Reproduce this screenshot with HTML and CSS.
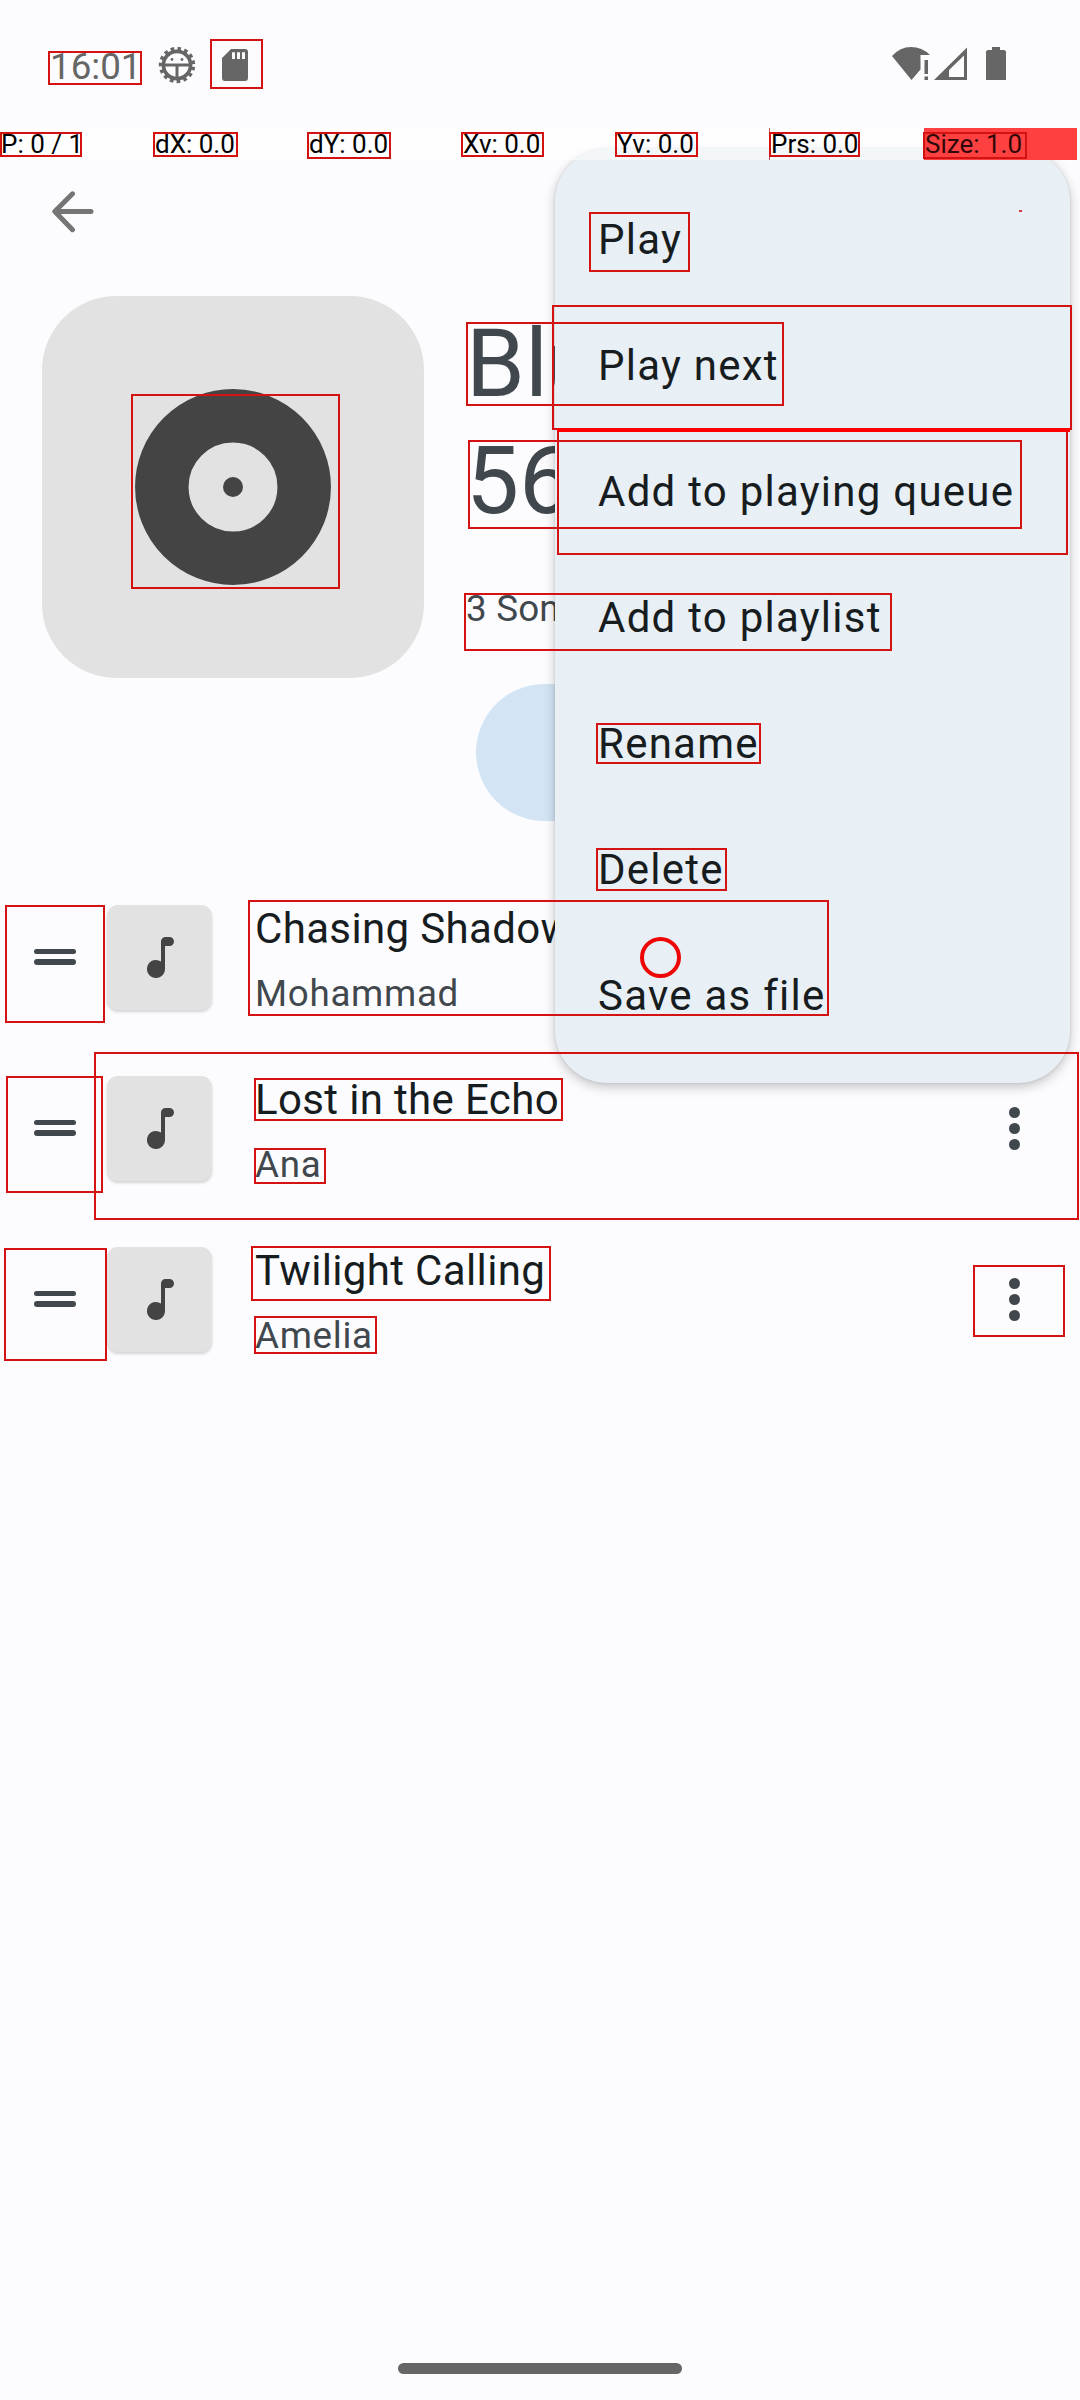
FILE: index.html
```html
<!DOCTYPE html>
<html lang="en">
<head>
<meta charset="utf-8">
<title>Playlist</title>
<link rel="stylesheet" href="styles.css">
</head>
<body>
<div class="screen">
  <header class="status">
    <span class="clock">16:01</span>
    <svg class="gear" width="38" height="38" viewBox="-19 -19 38 38">
      <circle r="13.6" fill="none" stroke="#666" stroke-width="3.6"/>
      <circle r="16" fill="none" stroke="#666" stroke-width="4.4" stroke-dasharray="3.5 3.202" transform="rotate(6)"/>
      <path d="M-13 0H13M0 0V13" stroke="#666" stroke-width="3"/>
      <circle cx="-5" cy="-5.500" r="1.400" fill="#666"/><circle cx="5" cy="-5.500" r="1.400" fill="#666"/>
    </svg>
    <svg class="sdcard" width="26" height="32" viewBox="0 0 26 32">
      <path fill="#666" fill-rule="evenodd" d="M9 0H23a3 3 0 0 1 3 3V29a3 3 0 0 1-3 3H3a3 3 0 0 1-3-3V9ZM10 3.3V10h3V3.3ZM15 3.3V10h3V3.3ZM20 3.3V10h3V3.3Z"/>
    </svg>
    <span class="spacer"></span>
    <svg width="115" height="34" viewBox="892 47 115 34" fill="#666">
      <path d="M892 56Q900 47 911 47T930 55H920.500V69.500L911.500 80Z"/>
      <path d="M924.500 60h3.500v14h-3.500zM924.500 76.500h3.500v3.500h-3.500z"/>
      <path fill-rule="evenodd" d="M934 80L967 47.500V80ZM949 77H964V55.500L949 70Z"/>
      <path d="M992 47h8v3h4.500l1.500 1.500V80H986V51.500l1.500-1.500h4.500z"/>
    </svg>
  </header>
  <div class="toolbar">
    <svg width="42" height="42" viewBox="0 0 42 42" fill="none" stroke="#757575" stroke-width="5" stroke-linecap="round" stroke-linejoin="round">
      <path d="M39 20.500H3M20.500 2.800L2.800 20.500L20.500 38.700"/>
    </svg>
  </div>
  <section class="hero">
    <div class="cover">
      <svg width="196" height="196" viewBox="-98 -98 196 196">
        <circle r="71.200" fill="none" stroke="#444" stroke-width="53.500"/>
        <circle r="10" fill="#444"/>
      </svg>
    </div>
    <div class="info">
      <h1>Blue<br>56</h1>
      <p>3 Songs</p>
      <div class="pill"></div>
    </div>
  </section>
  <main class="songs">
    <div class="song">
      <span class="handle"></span>
      <span class="thumb"><svg width="27" height="41" viewBox="0 0 27 41"><path fill="#444" d="M14 4.500a4.500 4.500 0 0 1 4.500-4.500H22.500a4.500 4.500 0 0 1 0 9H18V32a9 9 0 1 1-4-7.500Z"/></svg></span>
      <div class="text"><div class="name">Chasing Shadows</div><div class="artist">Mohammad</div></div>
      <span class="more"><i></i><i></i><i></i></span>
    </div>
    <div class="song">
      <span class="handle"></span>
      <span class="thumb"><svg width="27" height="41" viewBox="0 0 27 41"><path fill="#444" d="M14 4.500a4.500 4.500 0 0 1 4.500-4.500H22.500a4.500 4.500 0 0 1 0 9H18V32a9 9 0 1 1-4-7.500Z"/></svg></span>
      <div class="text"><div class="name">Lost in the Echo</div><div class="artist">Ana</div></div>
      <span class="more"><i></i><i></i><i></i></span>
    </div>
    <div class="song">
      <span class="handle"></span>
      <span class="thumb"><svg width="27" height="41" viewBox="0 0 27 41"><path fill="#444" d="M14 4.500a4.500 4.500 0 0 1 4.500-4.500H22.500a4.500 4.500 0 0 1 0 9H18V32a9 9 0 1 1-4-7.500Z"/></svg></span>
      <div class="text"><div class="name">Twilight Calling</div><div class="artist">Amelia</div></div>
      <span class="more"><i></i><i></i><i></i></span>
    </div>
  </main>
  <div class="navbar"></div>

  <nav class="menu">
    <div>Play</div>
    <div>Play next</div>
    <div>Add to playing queue</div>
    <div>Add to playlist</div>
    <div>Rename</div>
    <div>Delete</div>
    <div>Save as file</div>
  </nav>

  <div class="pointer">
    <span>P: 0 / 1</span><span>dX: 0.0</span><span>dY: 0.0</span><span>Xv: 0.0</span><span>Yv: 0.0</span><span class="prs">Prs: 0.0</span><span class="size">Size: 1.0</span>
  </div>

  <svg class="marks" width="1080" height="2400" viewBox="0 0 1080 2400" fill="none" stroke="#d51212" stroke-width="2">
    <rect x="49" y="52" width="92" height="32"/>
    <rect x="211" y="40" width="51" height="48"/>
    <rect x="1" y="133" width="80" height="23"/>
    <rect x="154" y="133" width="83" height="23"/>
    <rect x="308" y="133" width="82" height="25"/>
    <rect x="462" y="133" width="81" height="23"/>
    <rect x="616" y="133" width="81" height="23"/>
    <rect x="770" y="133" width="89" height="23"/>
    <rect x="924" y="133" width="102" height="25"/>
    <rect x="132" y="395" width="207" height="193"/>
    <rect x="467" y="323" width="316" height="82"/>
    <rect x="469" y="441" width="552" height="87"/>
    <rect x="465" y="594" width="426" height="56"/>
    <rect x="590" y="213" width="99" height="58"/>
    <rect x="553" y="306" width="518" height="123"/>
    <rect x="558" y="431" width="509" height="123"/>
    <path d="M557 430H1070" stroke="#f00" stroke-width="4"/>
    <rect x="597" y="724" width="163" height="39"/>
    <rect x="597" y="849" width="129" height="41"/>
    <rect x="249" y="901" width="579" height="114"/>
    <rect x="6" y="906" width="98" height="116"/>
    <rect x="7" y="1077" width="95" height="115"/>
    <rect x="5" y="1249" width="101" height="111"/>
    <rect x="95" y="1053" width="983" height="166"/>
    <rect x="255" y="1079" width="307" height="41"/>
    <rect x="255" y="1149" width="70" height="34"/>
    <rect x="252" y="1247" width="298" height="53"/>
    <rect x="255" y="1317" width="121" height="36"/>
    <rect x="974" y="1266" width="90" height="70"/>
    <circle cx="660.500" cy="957.500" r="18.500" stroke="#ee0505" stroke-width="4"/>
    <path d="M1019 211h3" stroke="#d63a40"/>
  </svg>
</div>
</body>
</html>
```
FILE: styles.css
```css
* { box-sizing: border-box; }
body { margin: 0; background: #fcfcff; font-family: Roboto, "Liberation Sans", sans-serif; color: #171c1f; }
.screen { position: relative; width: 1080px; height: 2400px; overflow: hidden; display: flex; flex-direction: column; }
.status { height: 128px; padding: 0 73px 0 50px; display: flex; align-items: center; }
.status svg { flex: none; }
.clock { width: 108px; font-size: 36.750px; line-height: 43px; margin-top: 4px; color: #666; }
.gear { margin-top: 1px; }
.sdcard { margin: 2px 0 0 26px; }
.spacer { flex: 1; }
.toolbar { height: 168px; padding: 63px 0 0 52px; }
.toolbar svg { display: block; }
.hero { height: 576px; padding-left: 42px; display: flex; align-items: flex-start; gap: 42px; }
.cover { flex: none; width: 382px; height: 382px; border-radius: 74px; background: #e2e2e2; display: flex; align-items: center; justify-content: center; }
.info { flex: 1; padding-top: 10px; }
.info h1 { margin: 0; font-size: 94.500px; line-height: 116.500px; font-weight: 400; color: #41484d; }
.info p { margin: 48px 0 0; font-size: 36.750px; line-height: 43px; letter-spacing: .2px; color: #41484d; }
.pill { margin: 54px 0 0 10px; width: 280px; height: 137px; border-radius: 69px; background: #d3e5f4; }
.song { height: 171px; display: flex; align-items: center; padding-left: 34px; }
.handle { flex: none; width: 42px; height: 16px; margin-top: -2px; display: flex; flex-direction: column; justify-content: space-between; }
.handle::before, .handle::after { content: ""; height: 5.500px; border-radius: 3px; background: #41484d; }
.thumb { flex: none; width: 105px; height: 105px; margin-left: 31px; border-radius: 11px; background: #e2e2e2; box-shadow: 0 2px 3px rgba(0,0,0,.16); display: flex; align-items: center; justify-content: center; }
.thumb svg { margin-left: 1px; }
.text { flex: 1; align-self: flex-start; padding: 32px 0 0 43px; white-space: nowrap; }
.name { font-size: 42px; line-height: 49px; letter-spacing: .35px; }
.artist { margin-top: 19px; font-size: 36.750px; line-height: 43px; letter-spacing: .7px; color: #41484d; }
.more { flex: none; width: 11px; margin-right: 60px; display: flex; flex-direction: column; gap: 5px; }
.more i { height: 11px; border-radius: 50%; background: #41484d; }
.navbar { margin: auto auto 26px; width: 284px; height: 11px; border-radius: 6px; background: #666; }
.menu { position: absolute; left: 555px; top: 149px; width: 515px; height: 934px; padding: 27px 0 0 43px; border-radius: 52px; background: #e8eff5; box-shadow: 0 4px 12px rgba(0,0,0,.22), 0 0 3px rgba(0,0,0,.12); }
.menu div { height: 126px; display: flex; align-items: center; font-size: 42px; letter-spacing: 1.250px; white-space: nowrap; }
.pointer { position: absolute; left: 0; top: 128px; width: 1080px; height: 32px; display: grid; grid-template-columns: repeat(7, 153px); column-gap: 1px; font-size: 26px; line-height: 32px; color: #000; background: rgba(255,255,255,.5); }
.pointer span { padding-left: 1px; white-space: nowrap; }
.pointer .prs { box-shadow: -1px 0 #b85a5e; }
.pointer .size { background: #ff4040; color: #300808; }
.marks { position: absolute; left: 0; top: 0; }
```
